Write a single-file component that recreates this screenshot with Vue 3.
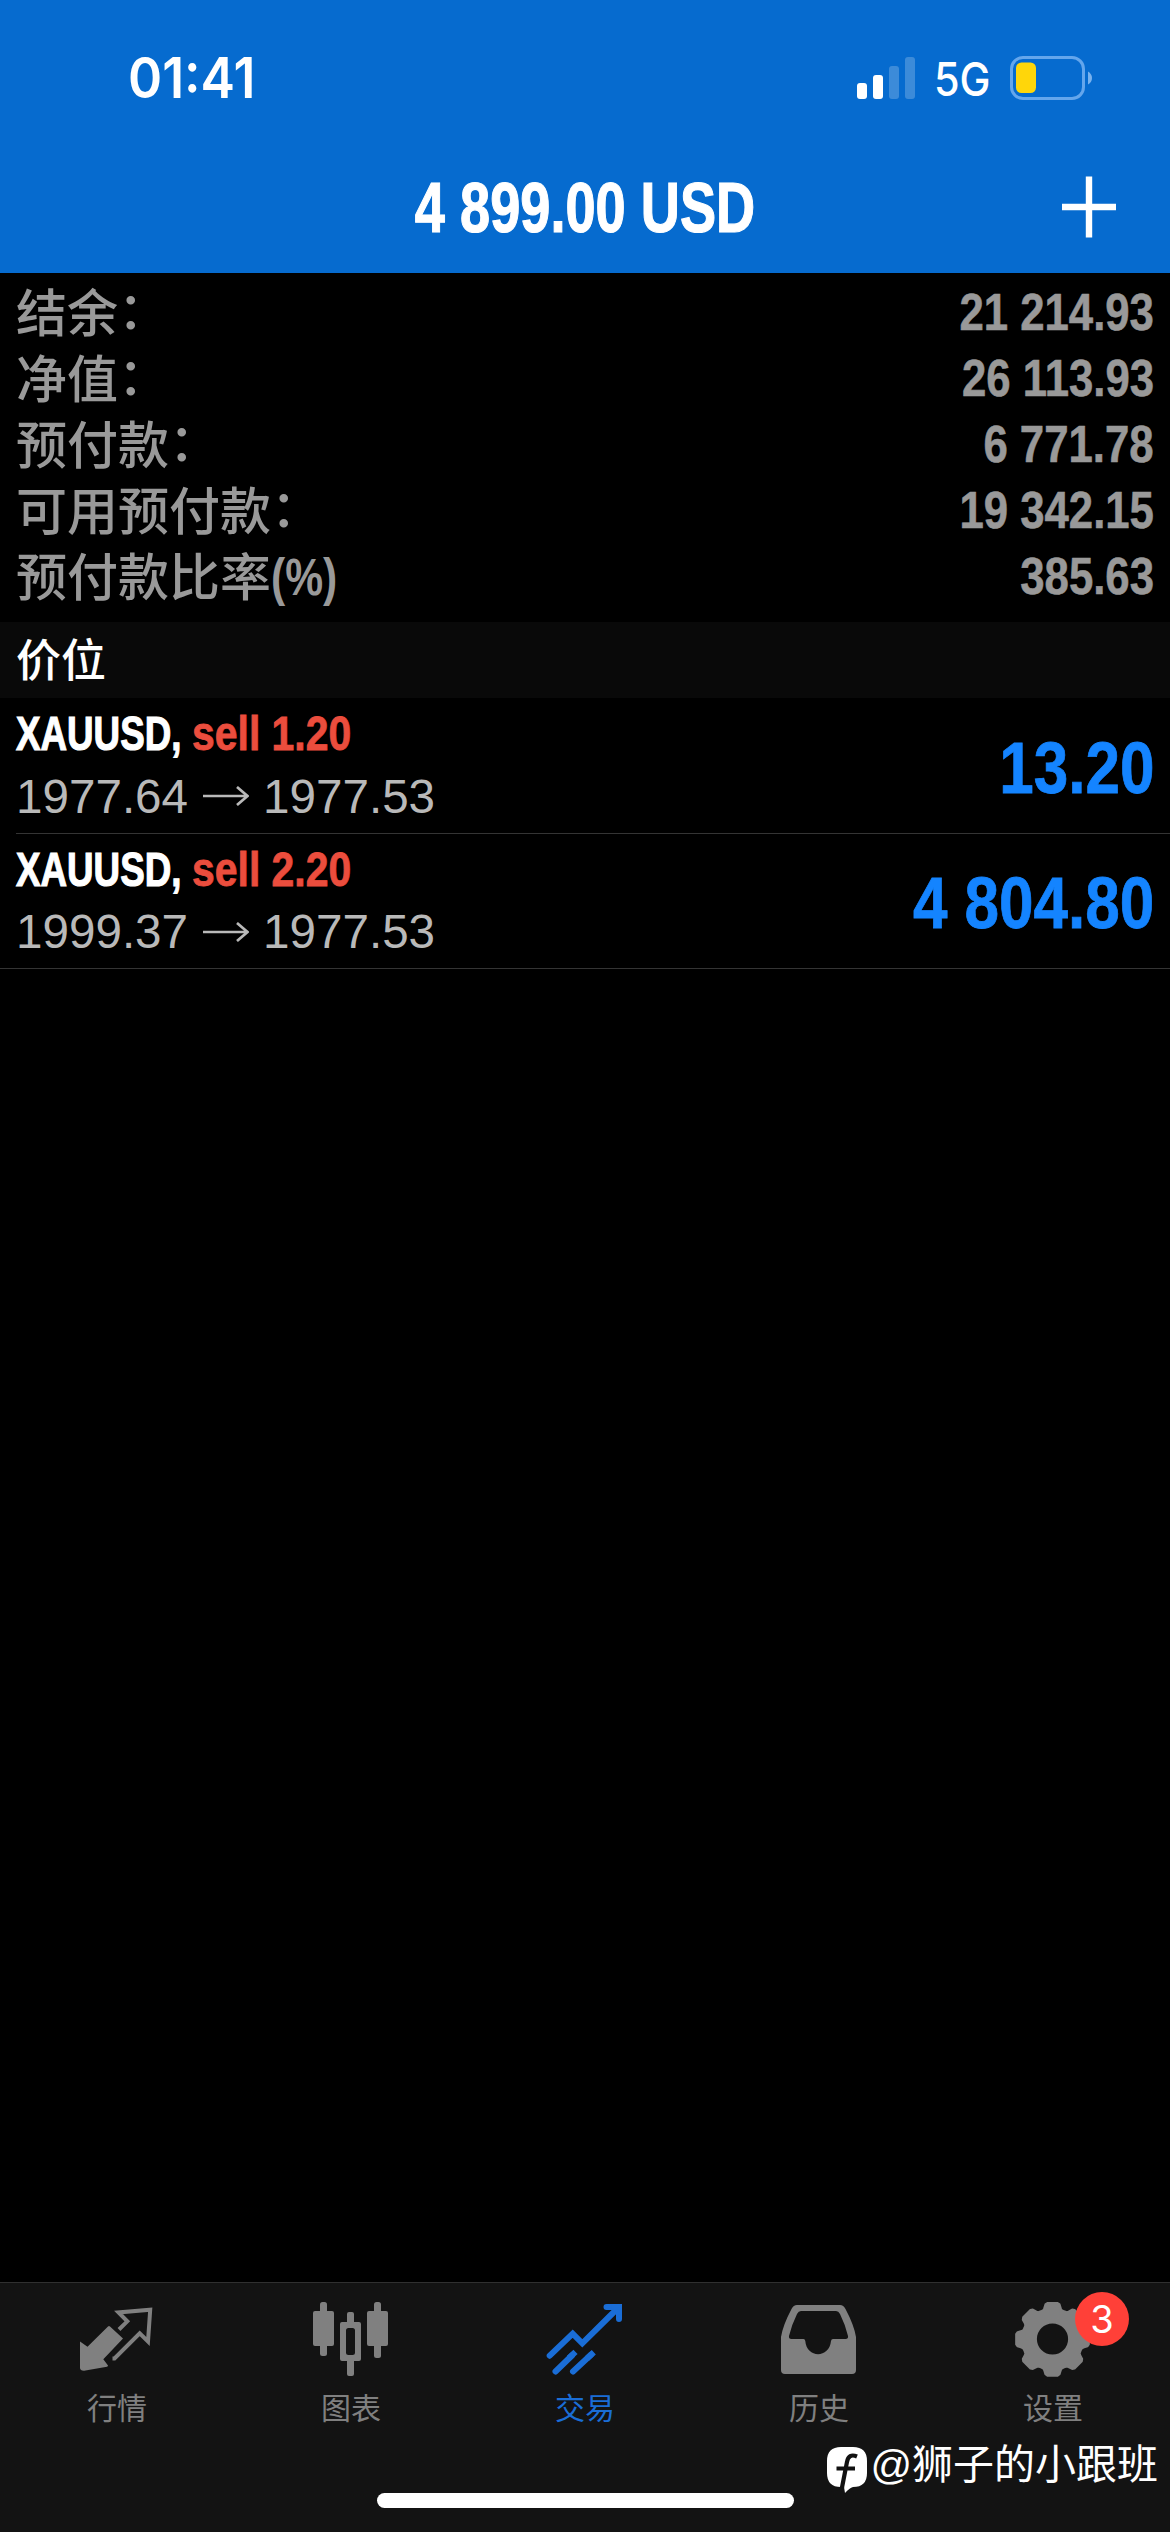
<script setup>
const summary = [
  { label: '结余', suffix: '：', value: '21 214.93' },
  { label: '净值', suffix: '：', value: '26 113.93' },
  { label: '预付款', suffix: '：', value: '6 771.78' },
  { label: '可用预付款', suffix: '：', value: '19 342.15' },
  { label: '预付款比率', unit: '(%)', value: '385.63' },
]

const positions = [
  { symbol: 'XAUUSD,', side: 'sell 1.20', open: '1977.64', current: '1977.53', profit: '13.20' },
  { symbol: 'XAUUSD,', side: 'sell 2.20', open: '1999.37', current: '1977.53', profit: '4 804.80' },
]

const tabs = [
  { id: 'quotes', label: '行情' },
  { id: 'chart', label: '图表' },
  { id: 'trade', label: '交易', active: true },
  { id: 'history', label: '历史' },
  { id: 'settings', label: '设置', badge: 3 },
]

// Eight-tooth gear outline, as [angle offset in degrees, radius] for each tooth
const toothProfile = [[-22.5, 30.3], [-17.5, 30.6], [-15, 32], [-11.5, 35.6], [-8, 36.7], [8, 36.7], [11.5, 35.6], [15, 32], [17.5, 30.6]]
const gearPoints = Array.from({ length: 8 }, (_, i) =>
  toothProfile.map(([offset, r]) => {
    const a = ((i * 45 + offset) * Math.PI) / 180
    return `${(39.5 + r * Math.sin(a)).toFixed(2)},${(40.3 - r * Math.cos(a)).toFixed(2)}`
  }).join(' ')
).join(' ')
</script>

<template>
  <div class="screen">
    <header class="header">
      <div class="status">
        <span class="time">01:41</span>
        <div class="indicators">
          <svg class="signal" width="59" height="42" viewBox="0 0 59 42" fill="#fff">
            <rect x="0" y="26" width="10" height="16" rx="3" />
            <rect x="16" y="18" width="10" height="24" rx="3" />
            <rect x="32" y="9" width="10" height="33" rx="3" opacity=".22" />
            <rect x="48" y="0" width="10" height="42" rx="3" opacity=".22" />
          </svg>
          <span class="network">5G</span>
          <svg class="battery" width="83" height="44" viewBox="0 0 83 44">
            <rect x="1.5" y="1.5" width="72" height="41" rx="11.5" fill="none" stroke="#64a6ec" stroke-width="3" />
            <rect x="6" y="6.5" width="20" height="30.5" rx="5.5" fill="#ffd60a" />
            <path d="M78 15.5q4 2.500 4 6.500t-4 6.500z" fill="#79b2ee" />
          </svg>
        </div>
      </div>
      <div class="titlebar">
        <h1 class="title">4 899.00 USD</h1>
        <svg class="plus" width="54" height="62" viewBox="0 0 54 62" stroke="#fff" stroke-width="6.400">
          <path d="M0 31H54M27 0.500V61.500" />
        </svg>
      </div>
    </header>

    <section class="summary">
      <div v-for="row in summary" :key="row.label" class="summary-row">
        <div class="label">
          <span>{{ row.label }}</span>
          <span v-if="row.suffix" class="colon">{{ row.suffix }}</span>
          <span v-if="row.unit" class="unit">{{ row.unit }}</span>
        </div>
        <span class="amount">{{ row.value }}</span>
      </div>
    </section>

    <div class="section-title">价位</div>

    <section class="positions">
      <article v-for="(p, i) in positions" :key="i" class="position">
        <div class="details">
          <div class="order">
            <span class="symbol">{{ p.symbol }}</span>
            <span class="side">{{ p.side }}</span>
          </div>
          <div class="prices">
            <span>{{ p.open }}</span>
            <svg class="arrow" width="46" height="20" viewBox="0 0 46 20" fill="none" stroke="#b9b9b9" stroke-width="2.700">
              <path d="M0 10H44M34 1L44.500 10L34 19" />
            </svg>
            <span>{{ p.current }}</span>
          </div>
        </div>
        <span class="profit">{{ p.profit }}</span>
      </article>
    </section>

    <footer class="tabbar">
      <nav class="tabs">
        <div v-for="tab in tabs" :key="tab.id" class="tab" :class="{ active: tab.active }">
          <svg class="icon" width="80" height="80" viewBox="0 0 80 80">
            <template v-if="tab.id === 'quotes'">
              <path d="M3 42.500L10.500 47.700L31 27.500Q32 26.500 33 27.500L46 39.500L26.300 60.300L31 66.500Q31 67.500 30 67.800L7 71.800Q3 71.500 3 69Z" fill="currentColor" />
              <path d="M42 30.500L50.300 22.300L41.500 13.500L73.200 10.800L71 42.500L62.700 34.300L37.500 59.500H35.500" fill="none" stroke="currentColor" stroke-width="4" />
            </template>
            <g v-else-if="tab.id === 'chart'" fill="currentColor">
              <rect x="9" y="3" width="7" height="54" rx="2.500" />
              <rect x="2" y="12" width="21" height="35" rx="2" />
              <rect x="63" y="3" width="7" height="56" rx="2.500" />
              <rect x="56" y="12" width="21" height="35" rx="2" />
              <path fill-rule="evenodd" d="M38 13h3q2 0 2 2v8h5q2 0 2 2v35q0 2-2 2h-5v13q0 2-2 2h-3q-2 0-2-2V62h-5q-2 0-2-2V25q0-2 2-2h5v-8q0-2 2-2zM37.500 29q-2.500 0-2.500 2.500v22q0 2.500 2.500 2.500h4q2.500 0 2.500-2.500v-22q0-2.500-2.500-2.500z" />
            </g>
            <g v-else-if="tab.id === 'trade'" fill="none" stroke="currentColor" stroke-width="6" stroke-linecap="round">
              <path d="M4.700 56.700L27.700 34.700L37.300 44.300L73 9" />
              <path d="M61.500 8H74V20" />
              <path d="M67 5H77V16L72 15L66 9Z" fill="currentColor" stroke="none" />
              <path d="M10.500 72.500L27 56.500M28 72.500L46 55.800" />
              <path d="M24 59L30.500 52.800M42 59.500L48.800 53.200" stroke-linecap="butt" />
            </g>
            <path v-else-if="tab.id === 'history'" fill="currentColor" fill-rule="evenodd" d="M18 6H61Q64.500 6 66.500 10Q75 26 77 38V71Q77 75 73 75H6Q2 75 2 71V38Q4 26 12.500 10Q14.500 6 18 6ZM22 12Q19.500 12 18 15Q13 25 10 37Q9.500 40 12.500 40H24.500Q26 40 26.300 42C27.500 59.500 50.500 59.500 52 42Q52.300 40 54 40H66.500Q69.500 40 69 37Q66 25 61 15Q59.500 12 57 12Z" />
            <g v-else>
              <polygon :points="gearPoints" fill="currentColor" stroke="currentColor" stroke-width="2" stroke-linejoin="round" />
              <circle class="gear-hole" cx="39.500" cy="40" r="15.600" />
            </g>
          </svg>
          <span class="tab-label">{{ tab.label }}</span>
          <span v-if="tab.badge" class="badge">{{ tab.badge }}</span>
        </div>
      </nav>
      <div class="home-indicator"></div>
    </footer>

    <div class="watermark">
      <svg width="42" height="48" viewBox="0 0 42 48">
        <path d="M15 1H27Q41 1 41 15V27Q41 41 27 41Q23.500 42 19 47L18 41H15Q1 41 1 27V15Q1 1 15 1Z" fill="#fff" />
        <path d="M31 10.500Q22.500 7 21 16L16 41.500M10.500 22.500H29" fill="none" stroke="#111" stroke-width="4.200" />
      </svg>
      <span class="handle">@狮子的小跟班</span>
    </div>
  </div>
</template>

<style>
body {
  margin: 0;
  background: #000;
}
</style>

<style scoped>
.screen {
  position: relative;
  display: flex;
  flex-direction: column;
  width: 1170px;
  height: 2532px;
  overflow: hidden;
  background: #000;
  color: #fff;
  font-family: "Liberation Sans", "Noto Sans CJK SC", sans-serif;
}

.header {
  height: 273px;
  background: #066bcf;
}

.status {
  box-sizing: border-box;
  display: flex;
  align-items: center;
  justify-content: space-between;
  height: 174px;
  padding: 0 77px 1px 128px;
}

.time {
  font: 600 56px/60px Inter, sans-serif;
  transform: translateY(-9px) scaleX(0.925);
  transform-origin: left;
}

.indicators {
  display: flex;
  align-items: center;
  transform: translateY(-9px);
}

.network {
  width: 75px;
  margin-left: 18px;
  font: 500 46px/50px Inter, sans-serif;
  transform: translateY(1px) scaleX(0.9);
  transform-origin: left;
}

.battery {
  margin-left: 1px;
}

.titlebar {
  display: grid;
  grid-template-columns: 1fr auto 1fr;
  align-items: center;
  height: 72px;
  padding: 0 54px;
}

.title {
  grid-column: 2;
  margin: 0;
  font-size: 71px;
  line-height: 72px;
  white-space: nowrap;
  -webkit-text-stroke: 1.2px #fff;
  transform: translateY(-2px) scaleX(0.763);
}

.plus {
  justify-self: end;
  margin-top: -42px;
  transform: translateY(18px);
}

.summary {
  box-sizing: border-box;
  height: 349px;
  padding: 6px 16px 0;
  color: #999;
}

.summary-row {
  display: flex;
  justify-content: space-between;
  height: 66.100px;
  font-size: 51px;
  line-height: 66px;
}

.label {
  display: flex;
  font-weight: 500;
  transform: translateY(2.500px);
}

.colon {
  transform: translateY(-3px);
}

.unit {
  font-weight: 700;
  transform: translateY(-1px) scaleX(0.835);
  transform-origin: left;
}

.amount {
  font-weight: 700;
  -webkit-text-stroke: 0.6px #999;
  transform: translateY(1px) scaleX(0.857);
  transform-origin: right;
}

.section-title {
  height: 76px;
  padding-left: 16px;
  background: #090909;
  font-size: 45px;
  font-weight: 500;
  line-height: 80px;
}

.position {
  box-sizing: border-box;
  display: flex;
  align-items: center;
  justify-content: space-between;
  height: 135.500px;
  margin-left: 16px;
  padding-right: 16px;
  border-bottom: 1px solid #343434;
}

.position:last-child {
  margin-left: 0;
  padding-left: 16px;
}

.order,
.prices {
  display: flex;
  align-items: center;
  height: 62px;
}

.order {
  font-size: 49px;
  font-weight: 700;
  transform: translateY(-1px);
}

.symbol {
  width: 176px;
  -webkit-text-stroke: 1.200px #fff;
  transform: scaleX(0.75);
  transform-origin: left;
}

.side {
  color: #eb4d3d;
  -webkit-text-stroke: 0.800px #eb4d3d;
  transform: scaleX(0.835);
  transform-origin: left;
}

.prices {
  gap: 14.500px;
  color: #b9b9b9;
  font-size: 47.600px;
}

.profit {
  color: #1484ff;
  font-size: 72.500px;
  font-weight: 700;
  -webkit-text-stroke: 0.800px #1484ff;
  transform: translateY(2px) scaleX(0.855);
  transform-origin: right;
}

.tabbar {
  box-sizing: border-box;
  height: 250px;
  margin-top: auto;
  border-top: 1px solid #303030;
  background: #131313;
}

.tabs {
  display: flex;
  height: 210px;
}

.tab {
  position: relative;
  display: flex;
  flex: 1;
  flex-direction: column;
  align-items: center;
  padding-top: 16px;
  color: #808080;
}

.tab.active {
  color: #1a6dd6;
}

.gear-hole {
  fill: #131313;
}

.tab-label {
  margin-top: 8px;
  font-size: 30px;
  line-height: 44px;
}

.badge {
  position: absolute;
  top: 9px;
  left: 139px;
  width: 54px;
  height: 54px;
  border-radius: 50%;
  background: #ff4038;
  color: #fff;
  font: 400 38px/54px Inter, sans-serif;
  text-align: center;
}

.home-indicator {
  width: 417px;
  height: 15px;
  margin: 0 auto;
  border-radius: 8px;
  background: #fff;
}

.watermark {
  position: absolute;
  right: 12px;
  bottom: 37px;
  display: flex;
  align-items: center;
  height: 50px;
  gap: 2px;
}

.handle {
  font-size: 41px;
  line-height: 50px;
  white-space: nowrap;
  transform: translateY(-5px);
}
</style>
